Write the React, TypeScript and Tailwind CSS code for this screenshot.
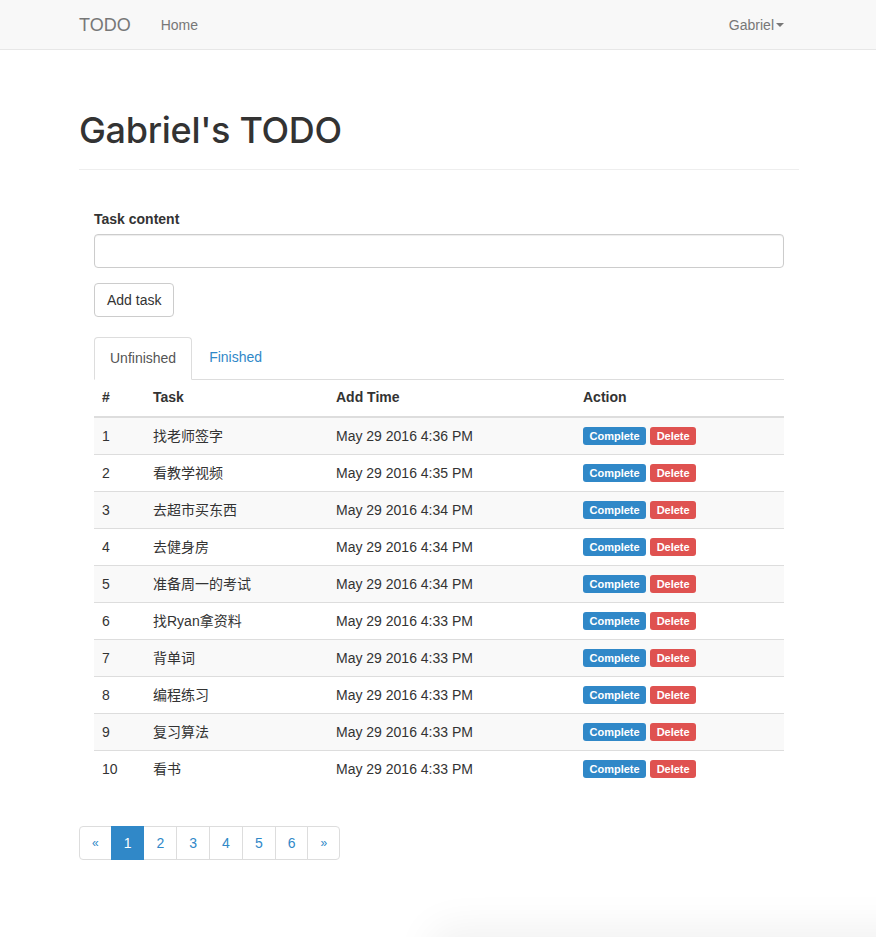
import * as React from "react";

const FONT = `[font-family:"Liberation_Sans","Noto_Sans_CJK_SC",sans-serif]`;

const TASKS = [
  ["找老师签字", "May 29 2016 4:36 PM"],
  ["看教学视频", "May 29 2016 4:35 PM"],
  ["去超市买东西", "May 29 2016 4:34 PM"],
  ["去健身房", "May 29 2016 4:34 PM"],
  ["准备周一的考试", "May 29 2016 4:34 PM"],
  ["找Ryan拿资料", "May 29 2016 4:33 PM"],
  ["背单词", "May 29 2016 4:33 PM"],
  ["编程练习", "May 29 2016 4:33 PM"],
  ["复习算法", "May 29 2016 4:33 PM"],
  ["看书", "May 29 2016 4:33 PM"],
];

const PAGES = ["«", "1", "2", "3", "4", "5", "6", "»"];

const App: React.FC = () => {
  return (
    <div className={FONT + " min-h-[937px] bg-white text-[14px] leading-[20px] text-[#333]"}>
      {/* navbar */}
      <nav className="h-[50px] border-b border-[#e7e7e7] bg-[#f8f8f8]">
        <div className="mx-auto flex h-full w-[750px] items-center justify-between pl-[16px] pr-[14px]">
          <div className="flex items-center">
            <span className="text-[18px] text-[#777]">TODO</span>
            <span className="ml-[30px] text-[#777]">Home</span>
          </div>
          <div className="flex items-center pr-[15px] text-[#777]">
            Gabriel
            <span className="ml-[2px] mt-[1px] h-0 w-0 border-x-[4px] border-t-[4px] border-x-transparent border-t-[#777]" />
          </div>
        </div>
      </nav>

      <div className="mx-auto w-[750px] pl-[16px] pr-[14px]">
        <div className="mt-[60px] mb-[20px] border-b border-[#eee] pb-[9px]">
          <h1 className="mb-[10px] [font-family:Inter,sans-serif] text-[36px] leading-[40px] font-medium tracking-[-0.3px] text-[#333]">
            Gabriel's TODO
          </h1>
        </div>

        <div className="px-[15px] pt-[19px]">
          <label className="mb-[5px] block font-bold">Task content</label>
          <input className="block h-[34px] w-full rounded-[4px] border border-[#ccc] px-3 shadow-[inset_0_1px_1px_rgba(0,0,0,0.075)]" />
          <button className="mt-[15px] h-[34px] rounded-[4px] border border-[#ccc] bg-white px-3 text-[#333]">
            Add task
          </button>

          {/* tabs */}
          <div className="mt-[20px] flex border-b border-[#ddd]">
            <div className="-mb-px rounded-t-[4px] border border-[#ddd] border-b-white bg-white px-[15px] pt-[10px] pb-[11px] text-[#555]">
              Unfinished
            </div>
            <div className="ml-[2px] px-[15px] pt-[10px] pb-[11px] text-[#3088c8]">Finished</div>
          </div>

          <table className="w-full border-collapse text-left">
            <thead>
              <tr className="border-b-2 border-[#ddd]">
                <th className="w-[51px] px-2 pt-[7px] pb-[9px] font-bold">#</th>
                <th className="w-[183px] px-2 pt-[7px] pb-[9px] font-bold">Task</th>
                <th className="w-[247px] px-2 pt-[7px] pb-[9px] font-bold">Add Time</th>
                <th className="px-2 pt-[7px] pb-[9px] font-bold">Action</th>
              </tr>
            </thead>
            <tbody>
              {TASKS.map((t, i) => (
                <tr key={"" + i} className={(i % 2 === 0 ? "bg-[#f9f9f9] " : "") + "border-t border-[#ddd]"}>
                  <td className="p-2">{i + 1}</td>
                  <td className="p-2">{t[0]}</td>
                  <td className="p-2">{t[1]}</td>
                  <td className="p-2">
                    <div className="flex gap-[4px]">
                      <span className="rounded-[3px] bg-[#3088c8] px-[6.5px] text-[11px] leading-[18px] font-bold text-white">
                        Complete
                      </span>
                      <span className="rounded-[3px] bg-[#df5250] px-[6.5px] text-[11px] leading-[18px] font-bold text-white">
                        Delete
                      </span>
                    </div>
                  </td>
                </tr>
              ))}
            </tbody>
          </table>
        </div>

        {/* pagination */}
        <div className="mt-[39px] flex">
          {PAGES.map((p, i) => (
            <span
              key={p}
              className={
                (i === 0 ? "rounded-l-[4px] " : "-ml-px ") +
                (i === PAGES.length - 1 ? "rounded-r-[4px] " : "") +
                (p === "1"
                  ? "z-10 border-[#3088c8] bg-[#3088c8] text-white "
                  : "border-[#ddd] bg-white text-[#3088c8] ") +
                "border px-3 py-[6px] " +
                (p === "«" || p === "»" ? "text-[12px] leading-[20px]" : "")
              }
            >
              {p}
            </span>
          ))}
        </div>
      </div>

      <div className="fixed -bottom-[60px] left-[440px] h-[60px] w-[520px] rounded-[8px] shadow-[0_0_40px_10px_rgba(0,0,0,0.06)]" />
    </div>
  );
};

export default App;
